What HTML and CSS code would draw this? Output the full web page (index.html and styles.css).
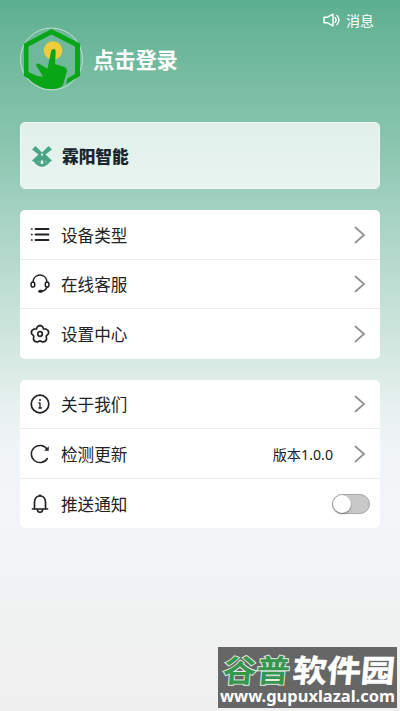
FILE: index.html
```html
<!DOCTYPE html>
<html lang="zh-CN">
<head>
<meta charset="utf-8">
<title>我的</title>
<link rel="stylesheet" href="styles.css">
</head>
<body>
<main class="page">
  <div class="topbar">
    <svg class="speaker" viewBox="0 0 18 14" fill="none" stroke="currentColor" stroke-width="1.4" stroke-linejoin="round" stroke-linecap="round"><path d="M1 4.2h3.600L10 1v12L4.600 9.800H1z"/><path d="M12 4.600q2.200 2.400 0 4.800M14 2.500q4 4.500 0 9"/></svg>
    <span>消息</span>
  </div>
  <header class="profile">
    <svg class="avatar" viewBox="0 0 64 64">
      <circle cx="31.500" cy="32" r="31" fill="#70b89b" stroke="#c2dfd2" stroke-width="1"/>
      <path fill-rule="evenodd" d="M31.500 2 60 16.500V49L46 57l1.500-5.500 7.500-4.500V19.500L31.500 7.500 8.500 19.500V45L20 50.500 19 58 4 49V16.500z" fill="#08a516"/>
      <circle cx="33" cy="23.500" r="9.300" fill="#f0cc3b"/>
      <path d="M33.500 22q2.300 0 2.200 3L35 37l9.500 3q2.500 1 2.500 4l-3 10q0 6-7 7.500-8 1.500-15-1Q12 56 7 50l7-1 9 .5-6.500-10.500q-1-3.500 2.500-2.300l8.500 5 3.500-17q.5-2.700 2.500-2.700z" fill="#08a516"/>
    </svg>
    <h1 class="login">点击登录</h1>
  </header>
  <section class="brand">
    <svg class="mill" viewBox="0 0 22 22" fill="#4ba585">
      <path d="M4.500 1 11 7.500 17.500 1 21 4.500 14.500 9.500 21 15.500 17 18.500 14 16v5q-3 1-6 0v-5l-3 2.500-4-3 6.500-6L1 4.500z"/>
      <path d="M4 18.500 7 17h8l3 1.500q-3 3-7 3t-7-3z"/>
      <circle cx="11" cy="9.700" r="1.100" fill="#e5f2ed"/><path d="M9.800 15.500h2.400v3.500H9.800z" fill="#e5f2ed"/>
    </svg>
    <strong>霖阳智能</strong>
  </section>
  <section class="menu">
    <div class="row">
      <svg class="icon" viewBox="0 0 20 20"><path d="M5.500 4H18.500M5.500 9.500H18.500M5.500 15H18.500" stroke-width="1.800"/><path d="M1.500 4h.6M1.500 9.500h.6M1.500 15h.6"/></svg>
      <span class="label">设备类型</span>
      <svg class="chevron" viewBox="0 0 12 18"><path d="m1.500 1.500 8.500 7.500-8.500 7.500"/></svg>
    </div>
    <div class="row">
      <svg class="icon" viewBox="0 0 20 20"><path d="M3 8C4-1.300 16-1.300 17 8M17 13q-1 3.500-5.500 4.200"/><ellipse cx="2.900" cy="10.500" rx="1.900" ry="2.600"/><ellipse cx="17.100" cy="10.500" rx="1.900" ry="2.600"/><path d="M9.800 17.200h1.400" stroke-width="3"/></svg>
      <span class="label">在线客服</span>
      <svg class="chevron" viewBox="0 0 12 18"><path d="m1.500 1.500 8.500 7.500-8.500 7.500"/></svg>
    </div>
    <div class="row">
      <svg class="icon" viewBox="0 0 20 20"><path d="M7.300 2.800Q10 .2 12.700 2.800L13.500 5l2.800.2q3.200 1.300 2 4.600L16.200 12l.4 3q-.9 3.200-4.300 2.900L10 16.700l-2.300 1.200q-3.400.3-4.300-2.900l.4-3-2.100-2.200q-1.200-3.300 2-4.600L6.500 5z" stroke-width="1.700"/><circle cx="10" cy="10" r="2.300" stroke-width="1.700"/></svg>
      <span class="label">设置中心</span>
      <svg class="chevron" viewBox="0 0 12 18"><path d="m1.500 1.500 8.500 7.500-8.500 7.500"/></svg>
    </div>
  </section>
  <section class="menu">
    <div class="row">
      <svg class="icon" viewBox="0 0 20 20"><circle cx="10" cy="10" r="8.800" stroke-width="1.700"/><path d="M9 9h1v5M8.800 14h2.600" stroke-width="1.300"/><path d="M10 5.900v.1" stroke-width="2"/></svg>
      <span class="label">关于我们</span>
      <svg class="chevron" viewBox="0 0 12 18"><path d="m1.500 1.500 8.500 7.500-8.500 7.500"/></svg>
    </div>
    <div class="row">
      <svg class="icon" viewBox="0 0 20 20"><path d="M17.300 5.500A8.600 8.600 0 1 0 17.300 14.500"/><path d="M18.500 3v3.600h-3.600z" fill="#222" stroke-width=".5"/></svg>
      <span class="label">检测更新</span>
      <span class="version">版本1.0.0</span>
      <svg class="chevron" viewBox="0 0 12 18"><path d="m1.500 1.500 8.500 7.500-8.500 7.500"/></svg>
    </div>
    <div class="row">
      <svg class="icon" viewBox="0 0 20 20"><path d="M2.500 15h15M4.500 14.800V8C5-.2 15-.2 15.500 8v6.800M7.300 15.500q.3 2.800 2.700 2.800t2.700-2.800M10 1v.8" stroke-width="1.700"/></svg>
      <span class="label">推送通知</span>
      <span class="switch"><span class="knob"></span></span>
    </div>
  </section>
  <aside class="watermark">
    <svg viewBox="0 0 179 61">
      <g transform="translate(4 35) skewX(-5)">
        <text class="mark green" x="0" y="0" textLength="67" lengthAdjust="spacingAndGlyphs">谷普</text>
        <text class="mark white" x="70" y="0" textLength="102" lengthAdjust="spacingAndGlyphs">软件园</text>
      </g>
      <text class="url" x="2" y="55" textLength="175" lengthAdjust="spacingAndGlyphs">www.gupuxlazal.com</text>
    </svg>
  </aside>
</main>
</body>
</html>
```
FILE: styles.css
```css
* { box-sizing: border-box; }
body {
  margin: 0;
  font-family: "Noto Sans", "Noto Sans CJK SC", sans-serif;
  color: #222;
}
.page {
  position: relative;
  height: 711px;
  padding: 10px 20px 0;
  overflow: hidden;
  background: linear-gradient(#5caf90 0, #6bb699 40px, #80c1a8 110px, #88c4ae 140px, #a0d0bf 200px, #bcddd1 280px, #d8eae4 365px, #eaf2f1 415px, #f2f5f8 465px, #f3f4f7 550px, #f0f1f1 620px, #f0f0f0 711px);
}
svg { display: block; flex: none; }
.topbar {
  display: flex;
  align-items: center;
  justify-content: flex-end;
  height: 20px;
  padding-right: 6px;
  gap: 5px;
  color: #fff;
  font: 14px/20px "Noto Sans CJK SC", sans-serif;
}
.speaker { width: 18px; height: 14px; }
.profile {
  display: flex;
  align-items: center;
  height: 64px;
  margin-top: -3px;
  gap: 9px;
}
.avatar { width: 64px; height: 64px; }
.login {
  margin: 0;
  color: #fff;
  font: 700 21.200px/30px "Noto Sans CJK SC", sans-serif;
}
.brand {
  display: flex;
  align-items: center;
  height: 67px;
  margin-top: 31px;
  padding-left: 10px;
  gap: 9px;
  border: 1px solid #f0f8f5;
  border-radius: 5px;
  background: linear-gradient(#e1f0eb, #e8f4f0);
  color: #17252c;
  font: 700 16.700px/24px "Noto Sans CJK SC", sans-serif;
}
.mill { width: 22px; height: 22px; }
.menu {
  height: 148.500px;
  margin-top: 21px;
  border-radius: 5px;
  background: #fff;
}
.row {
  display: flex;
  align-items: center;
  height: 49.500px;
  padding: 1px 14px 0 10px;
}
.row:not(:last-child) { border-bottom: 1px solid #ececee; }
.icon {
  width: 20px;
  height: 20px;
  margin-right: 11px;
  fill: none;
  stroke: #222;
  stroke-width: 1.500;
  stroke-linecap: round;
  stroke-linejoin: round;
}
.label {
  flex: 1;
  font: 16.600px/24px "Noto Sans CJK SC", sans-serif;
}
.chevron {
  width: 12px;
  height: 18px;
  fill: none;
  stroke: #929292;
  stroke-width: 1.800;
  stroke-linecap: round;
}
.version {
  margin-right: 21px;
  font-size: 14.200px;
}
.switch {
  width: 38px;
  height: 20px;
  margin-right: -4px;
  border: 1px solid #aaa;
  border-radius: 10px;
  background: #c8c8c8;
}
.knob {
  display: block;
  width: 18px;
  height: 18px;
  border-radius: 50%;
  background: #fff;
  box-shadow: 0 1px 2px #0006;
}
.watermark {
  position: absolute;
  left: 218px;
  top: 647px;
  width: 179px;
  height: 61px;
  background: #666;
}
.mark { font: 700 31px "Noto Sans CJK SC", sans-serif; }
.green {
  fill: #35964d;
  stroke: #e4eee5;
  stroke-width: 1.800px;
  paint-order: stroke;
}
.white {
  fill: #fff;
  stroke: #fff;
  stroke-width: .6px;
}
.url {
  fill: #fff;
  font: 700 16.500px "Noto Sans", sans-serif;
}
```
